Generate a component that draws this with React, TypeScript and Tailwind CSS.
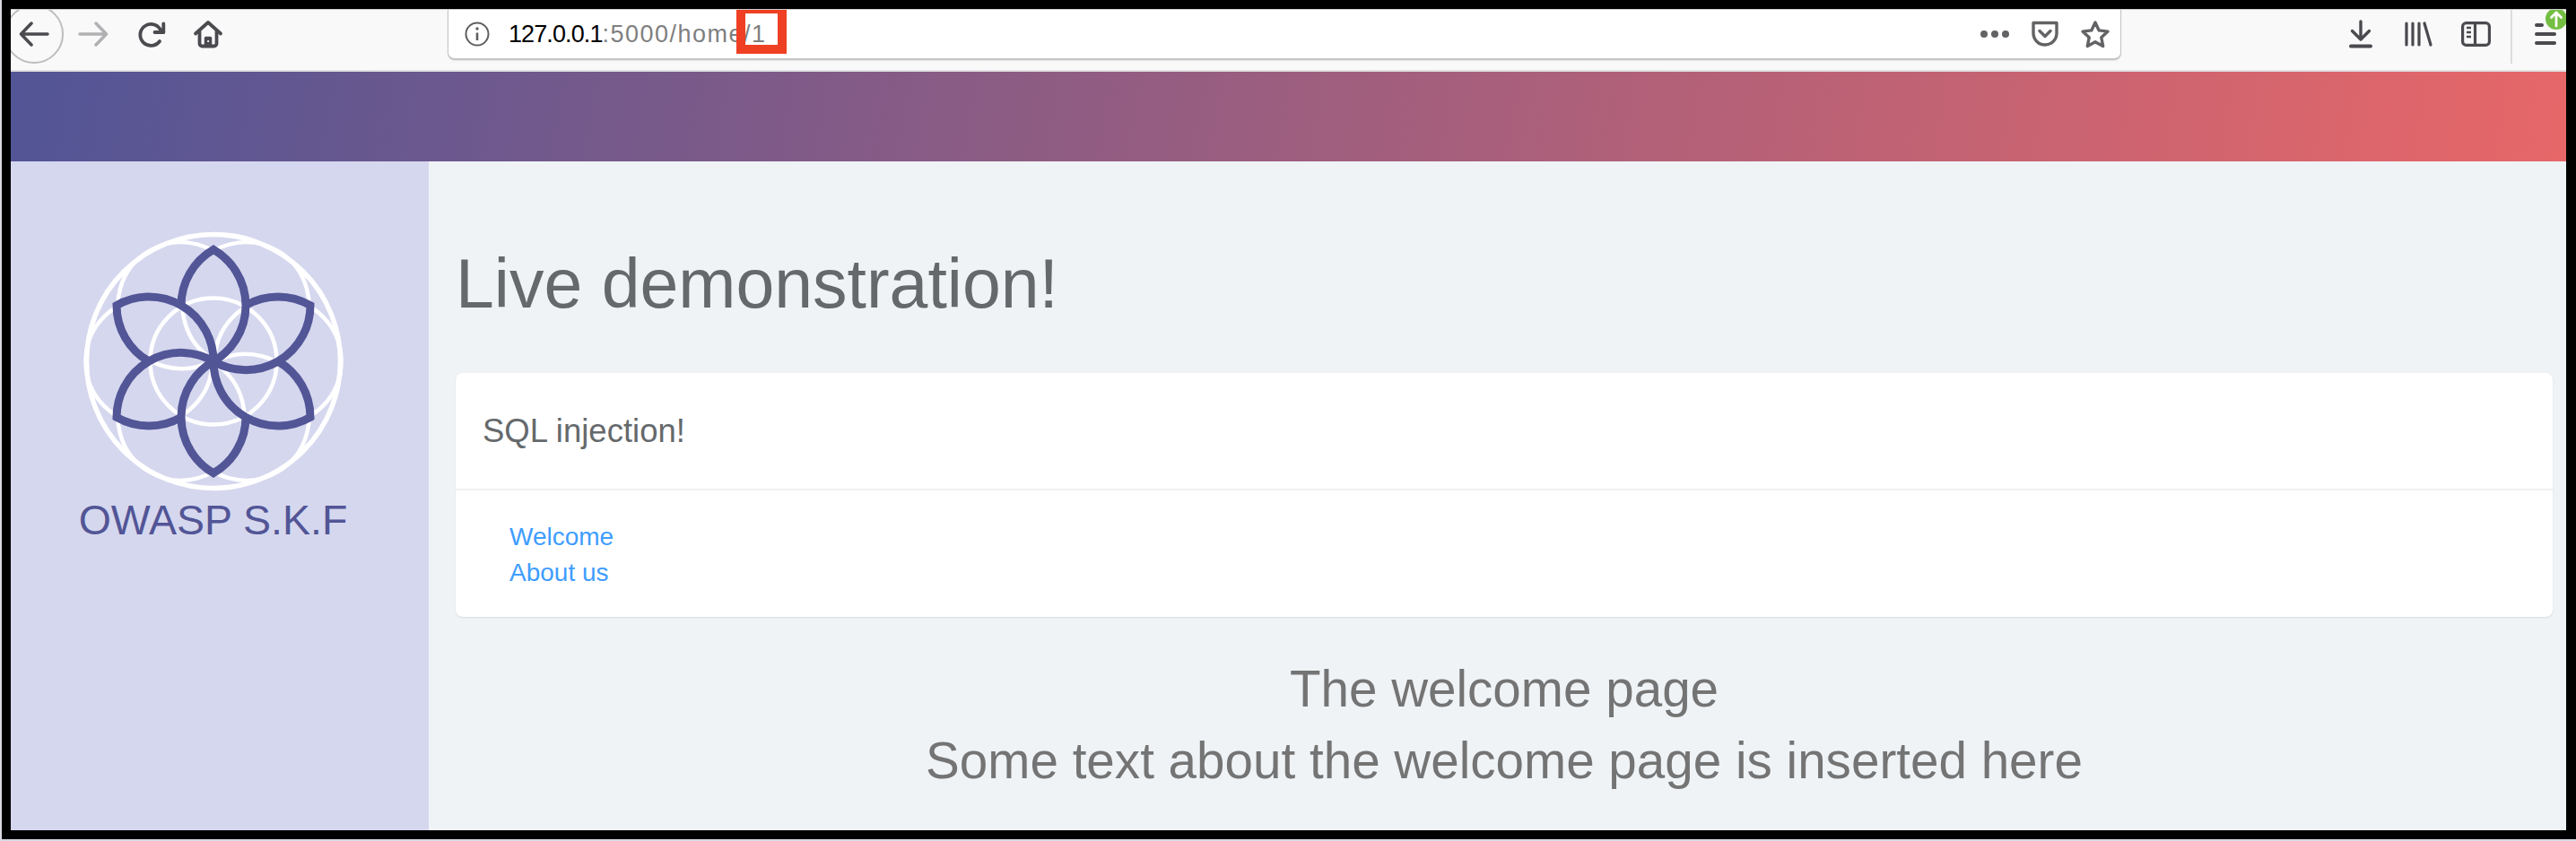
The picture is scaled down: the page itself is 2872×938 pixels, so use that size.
// @ts-nocheck
import React from 'react';

const FONT = "font-['Liberation_Sans',Arial,sans-serif]";

const BackArrow = () => (
  <svg width="34" height="28" viewBox="0 0 34 28" fill="none" stroke="#4a4a4f" strokeWidth="3.5" strokeLinecap="round" strokeLinejoin="round">
    <path d="M32 14H3M14 2L2.5 14L14 26" />
  </svg>
);

const ForwardArrow = () => (
  <svg width="34" height="28" viewBox="0 0 34 28" fill="none" stroke="#b1b1b3" strokeWidth="3.5" strokeLinecap="round" strokeLinejoin="round">
    <path d="M2 14H31M20 2L31.5 14L20 26" />
  </svg>
);

const Reload = () => (
  <svg width="32" height="30" viewBox="0 0 32 30" fill="none" stroke="#4a4a4f" strokeWidth="3.8" strokeLinecap="round" strokeLinejoin="round">
    <path d="M24 22A12 12 0 1 1 24.5 8.5L28.3 12" />
    <path d="M28.3 2.5V12H18.5" />
  </svg>
);

const Home = () => (
  <svg width="34" height="32" viewBox="0 0 34 32" fill="none" stroke="#4a4a4f" strokeWidth="3.8" strokeLinejoin="round" strokeLinecap="round">
    <path d="M3 15.5L17 3L31 15.5" />
    <path d="M7.5 13V26.5A3 3 0 0 0 10.5 29.5H23.5A3 3 0 0 0 26.5 26.5V13" />
    <path d="M13.5 29.5V20.5A1 1 0 0 1 14.5 19.5H19.5A1 1 0 0 1 20.5 20.5V29.5Z" fill="#4a4a4f" strokeWidth="1.5" />
    <rect x="16.2" y="23" width="1.8" height="2" fill="#f9f9fa" stroke="none" />
  </svg>
);

const Info = () => (
  <svg width="28" height="28" viewBox="0 0 28 28" fill="none" stroke="#5f5f62" strokeWidth="2">
    <circle cx="14" cy="14" r="12.5" />
    <path d="M14 12.5V21" strokeWidth="2.6" />
    <circle cx="14" cy="8" r="1.7" fill="#5f5f62" stroke="none" />
  </svg>
);

const Pocket = () => (
  <svg width="32" height="30" viewBox="0 0 32 30" fill="none" stroke="#636366" strokeWidth="3.4" strokeLinecap="round" strokeLinejoin="round">
    <path d="M3 2.5H29V14A13 13 0 0 1 3 14Z" />
    <path d="M10 11.5L16 17.5L22 11.5" />
  </svg>
);

const Star = () => (
  <svg width="34" height="32" viewBox="0 0 34 32" fill="none" stroke="#636366" strokeWidth="3.4" strokeLinejoin="round">
    <path d="M17 3L21.2 11.9L31 13.1L23.8 19.8L25.7 29.5L17 24.7L8.3 29.5L10.2 19.8L3 13.1L12.8 11.9Z" />
  </svg>
);

const Download = () => (
  <svg width="26" height="32" viewBox="0 0 26 32" fill="none" stroke="#4a4a4f" strokeWidth="3.4" strokeLinecap="round" strokeLinejoin="round">
    <path d="M13 2V21M3.5 12.5L13 22L22.5 12.5" />
    <path d="M2 29.5H24" strokeWidth="4" />
  </svg>
);

const Library = () => (
  <svg width="31" height="28" viewBox="0 0 31 28" fill="none" stroke="#4a4a4f" strokeWidth="3.2" strokeLinecap="round">
    <path d="M2 2V26M9 2V26M16 2V26M22 2L29 26" />
  </svg>
);

const SidebarIcon = () => (
  <svg width="33" height="28" viewBox="0 0 33 28" fill="none" stroke="#4a4a4f" strokeWidth="3.2" strokeLinejoin="round">
    <rect x="1.6" y="1.6" width="29.8" height="24.8" rx="4" />
    <path d="M15.5 2V26" />
    <path d="M6 7H11M6 12H11M6 17H11" strokeWidth="2.6" />
  </svg>
);

const Hamburger = () => (
  <svg width="28" height="26" viewBox="0 0 28 26" fill="none" stroke="#4a4a4f" strokeWidth="4" strokeLinecap="round">
    <path d="M4 3H10M4 13H24M4 23H24" />
  </svg>
);

const UpdateBadge = () => (
  <svg width="24" height="26" viewBox="0 0 24 26" className="absolute right-[-1px] top-[-3px]" fill="none">
    <circle cx="12" cy="13" r="12" fill="#74bf43" />
    <path d="M12 21V6M6.5 11.5L12 6L17.5 11.5" stroke="#fff" strokeWidth="2.8" strokeLinecap="round" strokeLinejoin="round" />
  </svg>
);

const Logo = () => (
  <svg width="292" height="292" viewBox="-146 -146 292 292" fill="none">
    <g stroke="#fff" strokeWidth="4.5">
      <circle cx="0" cy="0" r="141.5" strokeWidth="5.5" />
      <circle cx="0" cy="0" r="70.5" />
      {[0, 60, 120, 180, 240, 300].map((deg) => (
        <circle key={deg} cx="72" cy="0" r="70.5" transform={`rotate(${deg})`} />
      ))}
    </g>
    <g stroke="#525596" strokeWidth="9" strokeLinejoin="miter" strokeMiterlimit="10">
      {[0, 60, 120, 180, 240, 300].map((deg) => (
        <path key={deg} d="M-36 -62.35A72 72 0 0 1 0 -124.7A72 72 0 0 1 0 0" transform={`rotate(${deg})`} />
      ))}
    </g>
  </svg>
);

export default function App() {
  return (
    <div className={`h-[938px] w-full bg-[#d9d9e4] pb-[2px] pl-[2px] ${FONT}`}>
      <div className="h-[936px] bg-black pb-[10px] pl-[10px] pr-[11px] pt-[10px]">
        <div className="flex h-[916px] flex-col overflow-hidden">
          {/* browser chrome */}
          <div className="flex h-[70px] shrink-0 items-start overflow-hidden border-b-2 border-t border-b-[#e1e1e2] border-t-[#cfcfcf] bg-[#f9f9fa]">
            <div className="ml-[-7px] mt-[-6px] flex h-[66px] w-[66px] shrink-0 items-center justify-center rounded-full border-2 border-[#bdbdbd] bg-[#f9f9fa]">
              <BackArrow />
            </div>
            <div className="ml-[16px] mt-[13px] flex w-[34px] shrink-0"><ForwardArrow /></div>
            <div className="ml-[33px] mt-[13px] flex w-[32px] shrink-0"><Reload /></div>
            <div className="ml-[29px] mt-[11px] flex w-[34px] shrink-0"><Home /></div>

            <div className="ml-[250px] flex h-[56px] w-[1866px] shrink-0 items-center rounded-b-[8px] border border-b-2 border-t-0 border-[#c4c4c4] bg-white shadow-[0_1px_2px_rgba(0,0,0,0.08)]">
              <div className="ml-[18px] flex shrink-0"><Info /></div>
              <div className="relative ml-[21px] flex items-center text-[27px] leading-none">
                <span className="tracking-[-0.9px] text-black">127.0.0.1</span>
                <span className="tracking-[1.5px] text-[#7f7f7f]">:5000/home/1</span>
                <div className="absolute left-[254px] top-[-20px] h-[55px] w-[56px] border-[10px] border-[#ef4023]" />
              </div>
              <div className="ml-auto flex items-center">
                <div className="flex items-center gap-[4px]">
                  <span className="h-[8px] w-[8px] rounded-full bg-[#636366]" />
                  <span className="h-[8px] w-[8px] rounded-full bg-[#636366]" />
                  <span className="h-[8px] w-[8px] rounded-full bg-[#636366]" />
                </div>
                <div className="ml-[24px] flex"><Pocket /></div>
                <div className="ml-[23px] mr-[11px] flex"><Star /></div>
              </div>
            </div>

            <div className="ml-auto flex items-start">
              <div className="mt-[11px] flex"><Download /></div>
              <div className="ml-[36px] mt-[13px] flex"><Library /></div>
              <div className="ml-[32px] mt-[13px] flex"><SidebarIcon /></div>
              <div className="ml-[22px] h-[60px] w-[2px] bg-[#dcdcdd]" />
              <div className="relative h-[56px] w-[60px] shrink-0 pl-[23px] pt-[14px]">
                <div className="flex"><Hamburger /></div>
                <UpdateBadge />
              </div>
            </div>
          </div>

          {/* gradient header */}
          <div className="h-[100px] shrink-0 bg-[linear-gradient(100deg,#525596,#e76768)]" />

          <div className="flex min-h-0 flex-1">
            <aside className="flex w-[466px] shrink-0 flex-col items-center bg-[#d5d7ee] pt-[77px]">
              <div className="ml-[-14px] flex"><Logo /></div>
              <div className="ml-[-15px] mt-[3px] text-[46.5px] leading-[56px] text-[#525596]">OWASP S.K.F</div>
            </aside>

            <main className="min-w-0 flex-1 bg-[#eff3f6] pl-[30px] pr-[15px]">
              <h1 className="mt-[92px] text-[77px] leading-[88px] text-[#65696c]">Live demonstration!</h1>
              <div className="mt-[56px] rounded-[8px] bg-white shadow-[0_1px_2px_rgba(0,0,0,0.1)]">
                <div className="flex h-[131px] items-center border-b-2 border-[#f0f1f2] pl-[30px] pt-[2px] text-[36.5px] text-[#65696c]">SQL injection!</div>
                <div className="flex h-[141px] flex-col pl-[60px] pt-[32px] text-[28px] leading-[40px] text-[#3f9dff]">
                  <a>Welcome</a>
                  <a>About us</a>
                </div>
              </div>
              <div className="mt-[41px] text-center text-[56.6px] leading-[80px] text-[#747474]">
                <div>The welcome page</div>
                <div>Some text about the welcome page is inserted here</div>
              </div>
            </main>
          </div>
        </div>
      </div>
    </div>
  );
}
